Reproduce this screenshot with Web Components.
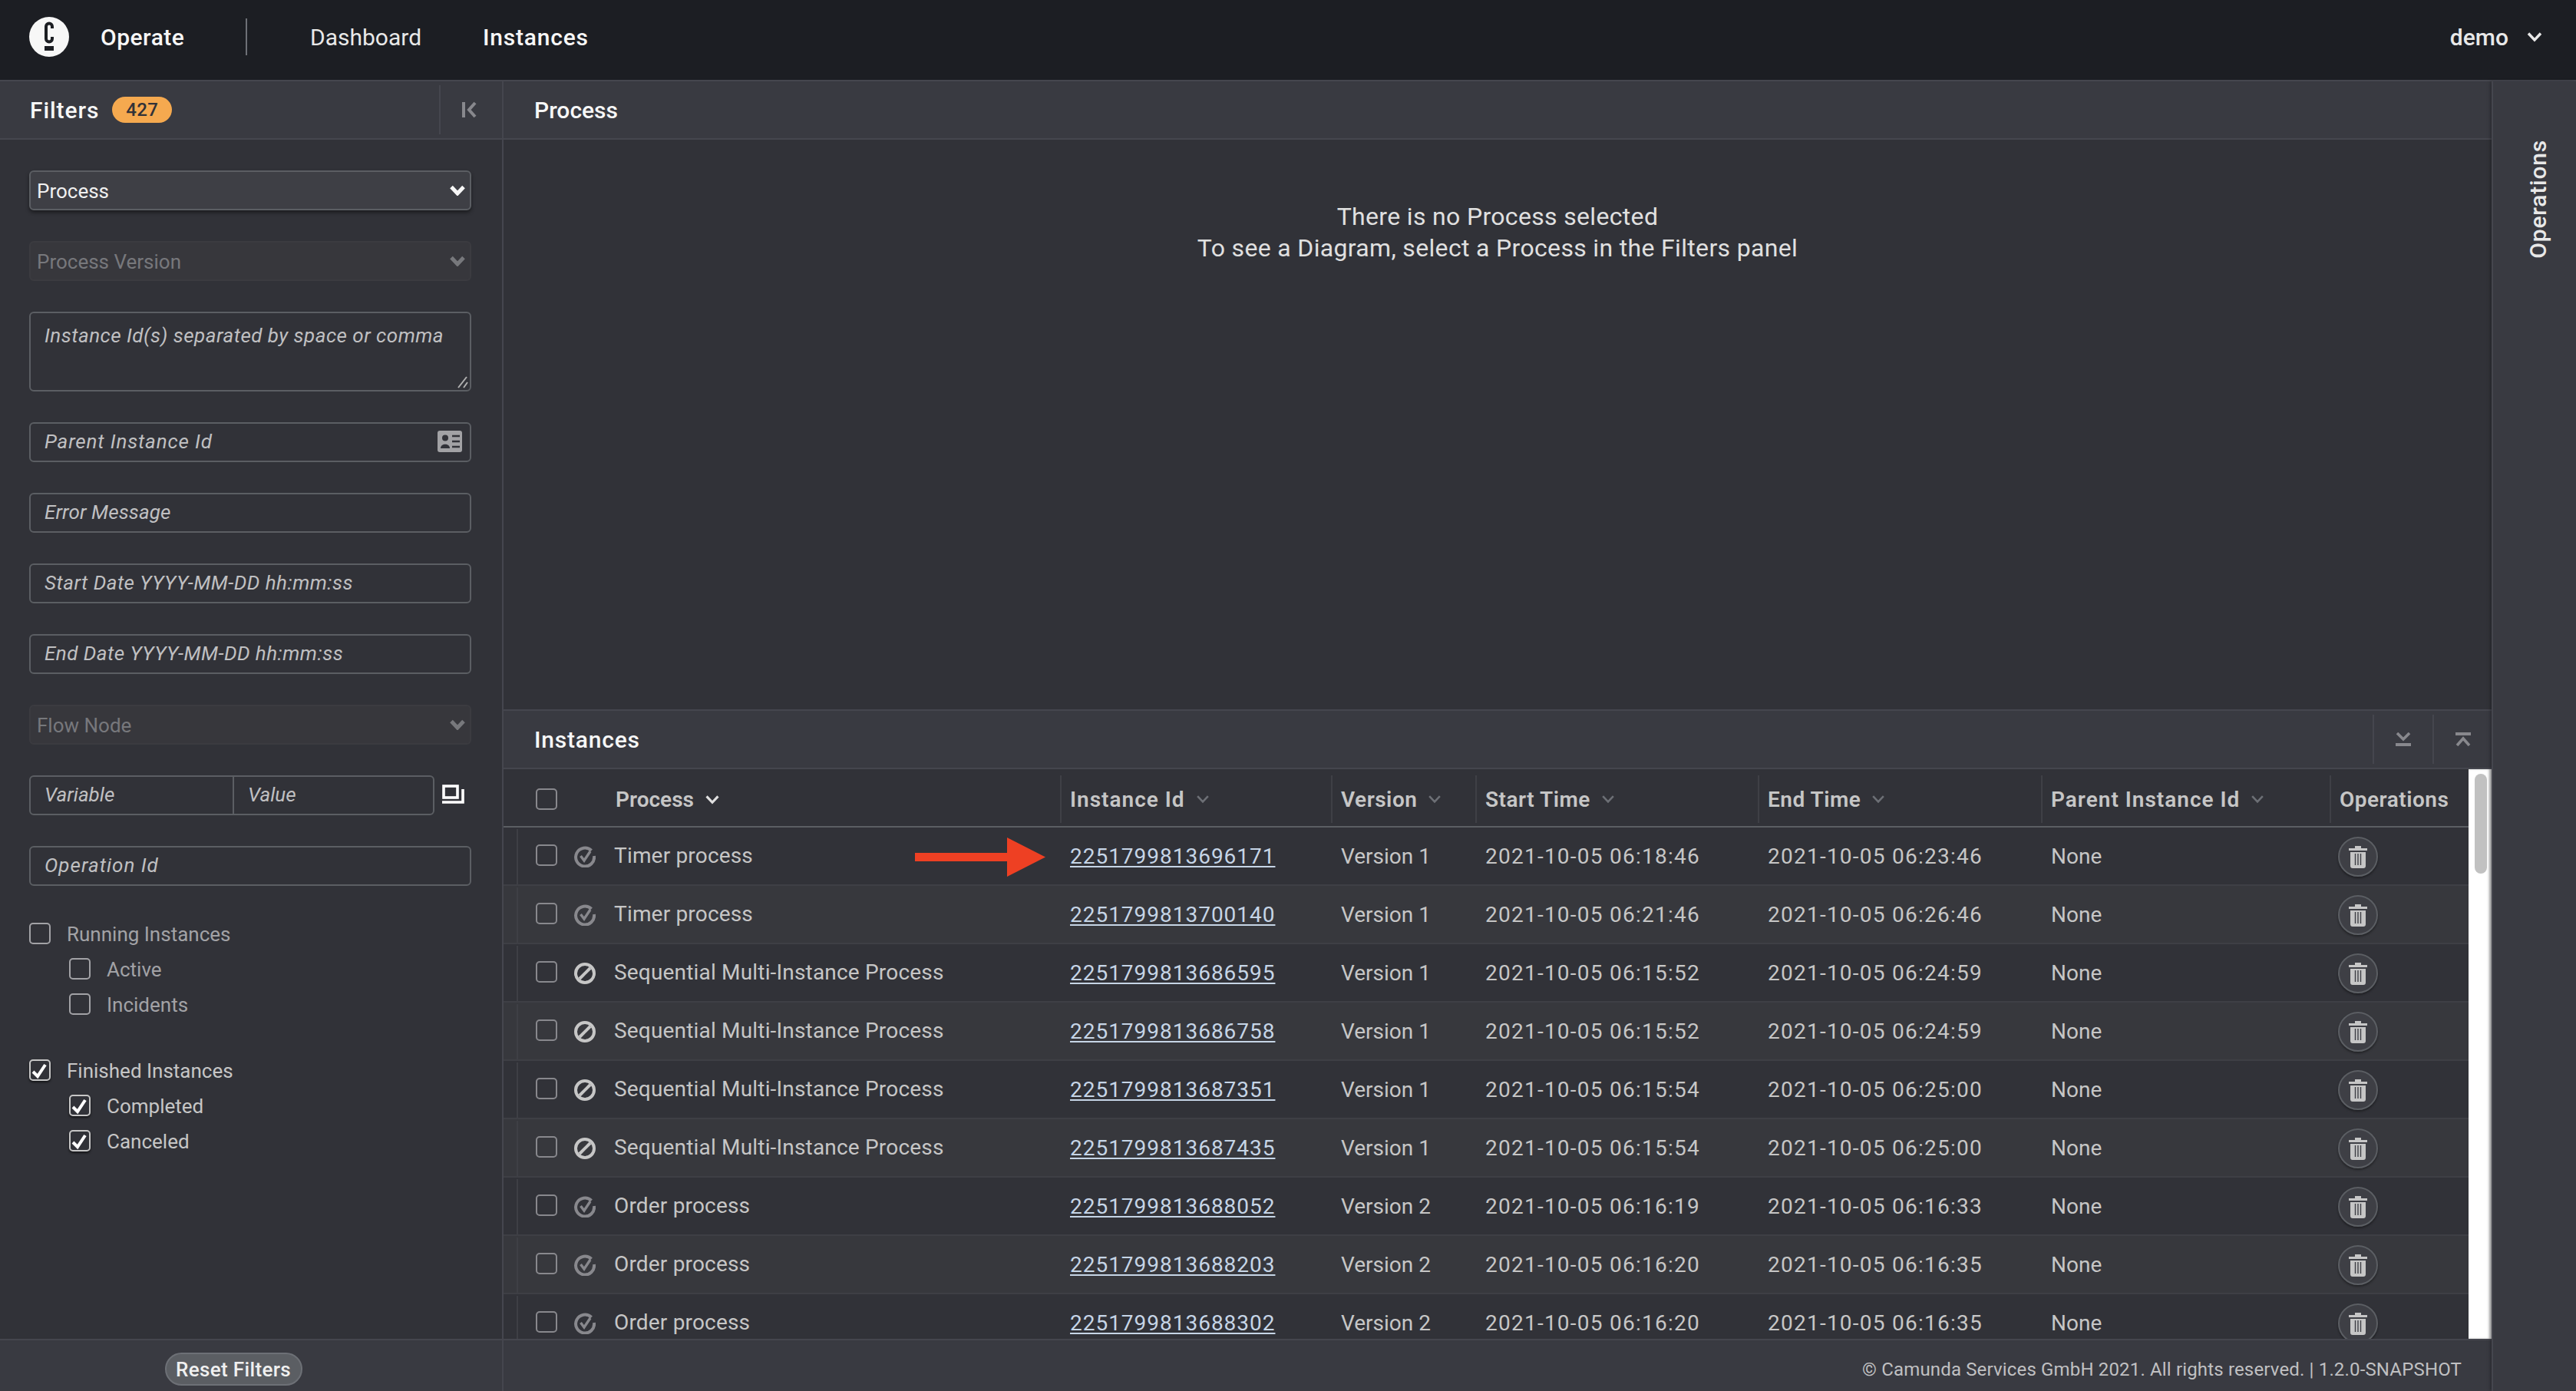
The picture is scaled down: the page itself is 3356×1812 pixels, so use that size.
<!DOCTYPE html>
<html>
<head>
<meta charset="utf-8">
<title>Operate</title>
<style>
  html, body { margin: 0; height: 100%; overflow: hidden; background: #313238; }
  body { font-family: Roboto, "Liberation Sans", sans-serif; font-size: 28px; color: #c6c6c6; }
</style>
</head>
<body>
<operate-app>
  <top-bar slot="top"></top-bar>
  <filters-panel slot="left"></filters-panel>
  <process-panel slot="main"></process-panel>
  <instances-panel slot="main">
    <instance-row marked state="done" process="Timer process" instance="2251799813696171" version="Version 1" start="2021-10-05 06:18:46" end="2021-10-05 06:23:46"></instance-row>
    <instance-row state="done" process="Timer process" instance="2251799813700140" version="Version 1" start="2021-10-05 06:21:46" end="2021-10-05 06:26:46"></instance-row>
    <instance-row state="canceled" process="Sequential Multi-Instance Process" instance="2251799813686595" version="Version 1" start="2021-10-05 06:15:52" end="2021-10-05 06:24:59"></instance-row>
    <instance-row state="canceled" process="Sequential Multi-Instance Process" instance="2251799813686758" version="Version 1" start="2021-10-05 06:15:52" end="2021-10-05 06:24:59"></instance-row>
    <instance-row state="canceled" process="Sequential Multi-Instance Process" instance="2251799813687351" version="Version 1" start="2021-10-05 06:15:54" end="2021-10-05 06:25:00"></instance-row>
    <instance-row state="canceled" process="Sequential Multi-Instance Process" instance="2251799813687435" version="Version 1" start="2021-10-05 06:15:54" end="2021-10-05 06:25:00"></instance-row>
    <instance-row state="done" process="Order process" instance="2251799813688052" version="Version 2" start="2021-10-05 06:16:19" end="2021-10-05 06:16:33"></instance-row>
    <instance-row state="done" process="Order process" instance="2251799813688203" version="Version 2" start="2021-10-05 06:16:20" end="2021-10-05 06:16:35"></instance-row>
    <instance-row state="done" process="Order process" instance="2251799813688302" version="Version 2" start="2021-10-05 06:16:20" end="2021-10-05 06:16:35"></instance-row>
  </instances-panel>
  <ops-rail slot="rail"></ops-rail>
</operate-app>

<script>
const chevron = (w, h, sw, color) => `<svg width="${w}" height="${h}" viewBox="0 0 20 14" style="display:block;flex:none" fill="none"><path d="M2 2.5 L10 11 L18 2.5" stroke="${color}" stroke-width="${sw}"/></svg>`;

class OperateApp extends HTMLElement {
  constructor() {
    super();
    this.attachShadow({mode: 'open'}).innerHTML = `
      <style>
        :host { display: flex; flex-direction: column; height: 1812px; }
        .body { flex: 1; display: flex; min-height: 0; }
        .main { flex: 1; display: flex; flex-direction: column; min-width: 0; }
      </style>
      <slot name="top"></slot>
      <div class="body">
        <slot name="left"></slot>
        <div class="main"><slot name="main"></slot></div>
        <slot name="rail"></slot>
      </div>`;
  }
}

class TopBar extends HTMLElement {
  constructor() {
    super();
    this.attachShadow({mode: 'open'}).innerHTML = `
      <style>
        :host { display: flex; align-items: center; height: 104px; box-sizing: content-box; padding: 0 44px 0 38px; background: #1c1e23; border-bottom: 2px solid #45464e; color: #f7f7f7; font-size: 30px; }
        .row { display: flex; align-items: center; width: 100%; height: 96px; margin-bottom: 8px; }
        svg { display: block; flex: none; }
        .brand { margin-left: 41px; width: 189px; font-weight: 500; letter-spacing: .5px; }
        .sep { width: 2px; height: 48px; background: #6d7076; }
        .dash { margin-left: 82px; width: 225px; color: #e8e8e8; }
        .inst { font-weight: 500; color: #f7f7f7; letter-spacing: .8px; }
        .user { margin-left: auto; margin-right: 24px; font-weight: 500; color: #e8e8e8; }
      </style>
      <div class="row">
        <svg width="52" height="52" viewBox="0 0 52 52">
          <circle cx="26" cy="26" r="26" fill="#f7f7f7"/>
          <path d="M30 15 V12.5 a4 4 0 0 0 -8 0 V28.5 a4 4 0 0 0 8 0 V26" fill="none" stroke="#1c1e23" stroke-width="4"/>
          <rect x="20" y="38" width="12" height="6" fill="#1c1e23"/>
        </svg>
        <span class="brand">Operate</span>
        <span class="sep"></span>
        <span class="dash">Dashboard</span>
        <span class="inst">Instances</span>
        <span class="user">demo</span>
        ${chevron(20, 14, 3.4, '#e8e8e8')}
      </div>`;
  }
}

class PanelHeader extends HTMLElement {
  constructor() {
    super();
    this.attachShadow({mode: 'open'}).innerHTML = `
      <style>
        :host { display: flex; align-items: center; height: 74px; flex: none; box-sizing: content-box; background: #393a41; border-bottom: 2px solid #45464e; color: #f7f7f7; font-size: 30px; font-weight: 500; padding-left: var(--pad, 40px); }
        .extra { margin-left: auto; display: flex; height: 64px; }
      </style>
      <slot></slot>
      <div class="extra"><slot name="extra"></slot></div>`;
  }
}

class FilterField extends HTMLElement {
  constructor() {
    super();
    this.attachShadow({mode: 'open'}).innerHTML = `
      <style>
        :host { display: flex; align-items: center; box-sizing: border-box; height: 52px; padding: 0 10px 2px 18px; border: 2px solid #5b5e63; border-radius: 6px; font-style: italic; font-size: 26px; letter-spacing: .48px; color: #c0c0c2; flex: none; }
        :host([tall]) { height: 104px; align-items: flex-start; padding-top: 14px; position: relative; }
        ::slotted(svg) { margin-left: auto; }
      </style>
      <slot></slot>`;
  }
}

class FilterSelect extends HTMLElement {
  connectedCallback() {
    const off = this.hasAttribute('disabled');
    const root = this.attachShadow({mode: 'open'});
    root.innerHTML = `
      <style>
        :host { display: flex; align-items: center; box-sizing: border-box; height: 52px; padding: 0 6px 0 8px; border-radius: 6px; font-size: 26px; flex: none; justify-content: space-between; }
        :host(:not([disabled])) { background: #3e3f45; border: 2px solid #5b5e63; color: #f0f0f0; box-shadow: 0 3px 5px rgba(0,0,0,.45); }
        :host([disabled]) { background: #37373c; border: 2px solid #3b3b40; color: #77787c; }
        slot { display: block; margin-top: 2px; }
      </style>
      <slot></slot>
      ${chevron(20, 14, 5, off ? '#77787c' : '#f7f7f7')}`;
  }
}

class FilterCheck extends HTMLElement {
  connectedCallback() {
    const on = this.hasAttribute('checked');
    this.attachShadow({mode: 'open'}).innerHTML = `
      <style>
        :host { display: flex; align-items: center; gap: 21px; height: 28px; font-size: 26px; color: ${on ? '#c6c6c6' : '#a2a2a6'}; }
        :host([child]) { margin-left: 52px; }
        .box { width: 28px; height: 28px; box-sizing: border-box; border: 2px solid ${on ? '#c6c6c6' : '#a2a2a6'}; border-radius: 5px; ${on ? 'box-shadow: 0 2px 3px rgba(0,0,0,.6);' : ''} flex: none; }
        svg { display: block; }
        slot { display: block; margin-top: 2px; }
      </style>
      <div class="box">${on ? `<svg width="24" height="24" viewBox="0 0 24 24"><path d="M3 14 L9 20 L19 5" fill="none" stroke="#fff" stroke-width="4"/></svg>` : ''}</div>
      <slot></slot>`;
  }
}

class FiltersPanel extends HTMLElement {
  constructor() {
    super();
    this.attachShadow({mode: 'open'}).innerHTML = `
      <style>
        :host { display: flex; flex-direction: column; width: 654px; flex: none; border-right: 2px solid #45464e; }
        panel-header { --pad: 39px; }
        .title { margin-right: 17px; letter-spacing: .9px; }
        .badge { display: inline-block; width: 78px; height: 34px; line-height: 34px; border-radius: 17px; background: #f5a94f; color: #313238; font-size: 24px; font-weight: 500; text-align: center; letter-spacing: .4px; }
        .collapse { display: flex; align-items: center; width: 82px; height: 64px; border-left: 2px solid #45464e; padding-left: 28px; box-sizing: border-box; }
        form { flex: 1; display: flex; flex-direction: column; gap: 40px; padding: 40px 40px 0 38px; }
        .pair { display: flex; align-items: center; gap: 10px; }
        .pair .vv { flex: none; width: 528px; display: flex; height: 52px; box-sizing: border-box; border: 2px solid #5b5e63; border-radius: 6px; font-style: italic; font-size: 26px; color: #c0c0c2; align-items: center; }
        .vv span { padding: 0 0 2px 18px; box-sizing: border-box; }
        .vv span:first-child { width: 263px; flex: none; }
        .vv span + span { flex: 1; border-left: 2px solid #5b5e63; height: 100%; display: flex; align-items: center; }
        .group { display: flex; flex-direction: column; gap: 18px; }
        .checks { display: flex; flex-direction: column; gap: 58px; margin-top: 8px; }
        footer { flex: none; height: 68px; border-top: 2px solid #45464e; background: #393a41; display: flex; justify-content: center; align-items: flex-start; padding: 16px 46px 0 0; box-sizing: border-box; }
        button { all: unset; box-sizing: border-box; width: 179px; height: 43px; border-radius: 22px; background: #5b5e63; border: 2px solid #6d7076; color: #f0f0f0; font-size: 26px; letter-spacing: .35px; font-weight: 500; text-align: center; line-height: 38px; }
        .resize { position: absolute; right: 2px; bottom: 2px; }
      </style>
      <panel-header>
        <span class="title">Filters</span><span class="badge">427</span>
        <div slot="extra" class="collapse">
          <svg width="20" height="22" viewBox="0 0 20 22"><path d="M2 1 V21" stroke="#88888d" stroke-width="4"/><path d="M17 2 L9 11 L17 20" fill="none" stroke="#88888d" stroke-width="4"/></svg>
        </div>
      </panel-header>
      <form>
        <filter-select>Process</filter-select>
        <filter-select disabled>Process Version</filter-select>
        <filter-field tall>Instance Id(s) separated by space or comma
          <svg class="resize" width="14" height="16" viewBox="0 0 14 16"><path d="M1 15 L12 1 M8 15 L13 8" stroke="#b0b0b0" stroke-width="2"/></svg>
        </filter-field>
        <filter-field style="letter-spacing:.85px">Parent Instance Id
          <svg width="32" height="28" viewBox="0 0 32 28" style="display:block">
            <rect width="32" height="28" rx="3" fill="#a2a2a5"/>
            <circle cx="10" cy="9.5" r="4" fill="#313238"/>
            <path d="M4 23 C4 16 16 16 16 23 Z" fill="#313238"/>
            <path d="M19 7 H29 M19 14 H29 M19 21 H29" stroke="#313238" stroke-width="2.6"/>
          </svg>
        </filter-field>
        <filter-field style="letter-spacing:.1px">Error Message</filter-field>
        <filter-field>Start Date YYYY-MM-DD hh:mm:ss</filter-field>
        <filter-field>End Date YYYY-MM-DD hh:mm:ss</filter-field>
        <filter-select disabled>Flow Node</filter-select>
        <div class="pair">
          <div class="vv"><span>Variable</span><span>Value</span></div>
          <svg width="29" height="25" viewBox="0 0 29 25" style="display:block;margin:-4px 0 0 0;flex:none">
            <rect x="2" y="2" width="18" height="15" fill="none" stroke="#fff" stroke-width="3.6"/>
            <path d="M0 23 H27 V6" fill="none" stroke="#fff" stroke-width="3.6"/>
          </svg>
        </div>
        <filter-field style="letter-spacing:1px">Operation Id</filter-field>
        <div class="checks">
          <div class="group">
            <filter-check>Running Instances</filter-check>
            <filter-check child>Active</filter-check>
            <filter-check child>Incidents</filter-check>
          </div>
          <div class="group">
            <filter-check checked>Finished Instances</filter-check>
            <filter-check checked child>Completed</filter-check>
            <filter-check checked child>Canceled</filter-check>
          </div>
        </div>
      </form>
      <footer><button>Reset Filters</button></footer>`;
  }
}

class ProcessPanel extends HTMLElement {
  constructor() {
    super();
    this.attachShadow({mode: 'open'}).innerHTML = `
      <style>
        :host { display: flex; flex-direction: column; flex: none; height: 818px; border-bottom: 2px solid #45464e; box-sizing: content-box; }
        .empty { flex: 1; text-align: center; padding-top: 80px; line-height: 41px; font-size: 32px; letter-spacing: .33px; color: #e0e0e0; }
      </style>
      <panel-header>Process</panel-header>
      <div class="empty">There is no Process selected<br>To see a Diagram, select a Process in the Filters panel</div>`;
  }
}

class InstancesPanel extends HTMLElement {
  constructor() {
    super();
    const sort = (c) => chevron(18, 12, 3, c);
    this.attachShadow({mode: 'open'}).innerHTML = `
      <style>
        :host { display: flex; flex-direction: column; flex: 1; min-height: 0; --cols: 17px 708px 353px 188px 368px 369px 376px 181px; }
        .title { letter-spacing: .8px; }
        .toggle { display: flex; align-items: center; justify-content: center; width: 78px; height: 64px; border-left: 2px solid #45464e; box-sizing: border-box; }
        .toggle.last { width: 77px; }
        .area { flex: 1; display: flex; min-height: 0; }
        .table { flex: 1; min-width: 0; overflow: hidden; }
        .head { display: grid; grid-template-columns: var(--cols); height: 74px; border-bottom: 2px solid #5b5e63; font-weight: 600; color: #c6c6c6; }
        .th { display: flex; align-items: center; gap: 14px; height: 62px; margin-top: 8px; border-left: 2px solid #3f4046; padding-left: 11px; letter-spacing: .5px; }
        .th.wide { letter-spacing: 1px; }
        .th.first { grid-column: 1 / 3; border: 0; padding-left: 0; letter-spacing: 0; }
        .th.first .box { margin: 0 62px 0 42px; width: 28px; height: 28px; box-sizing: border-box; border: 2px solid #88888d; border-radius: 5px; }
        .bar { flex: none; width: 30px; background: #fff; box-shadow: inset -3px 0 3px rgba(0,0,0,.25); padding: 6px 6px 0 8px; box-sizing: border-box; }
        .thumb { height: 130px; border-radius: 8px; background: #c1c1c1; }
        footer { flex: none; height: 68px; box-sizing: border-box; border-top: 2px solid #45464e; background: #393a41; text-align: right; padding-right: 39px; line-height: 76px; font-size: 24px; letter-spacing: .16px; color: #c0c0c2; }
      </style>
      <panel-header><span class="title">Instances</span>
        <div slot="extra" class="toggle"><svg width="20" height="18" viewBox="0 0 20 18"><path d="M2 1 L10 9 L18 1" fill="none" stroke="#88888d" stroke-width="3.6"/><path d="M0 16 H20" stroke="#88888d" stroke-width="4"/></svg></div>
        <div slot="extra" class="toggle last"><svg width="20" height="18" viewBox="0 0 20 18"><path d="M2 17 L10 8 L18 17" fill="none" stroke="#88888d" stroke-width="3.6"/><path d="M0 2 H20" stroke="#88888d" stroke-width="4"/></svg></div>
      </panel-header>
      <div class="area">
        <div class="table">
          <div class="head">
            <div class="th first"><span class="box"></span>Process ${chevron(20, 13, 3.4, '#e0e0e0')}</div>
            <div class="th wide">Instance Id ${sort('#6d7076')}</div>
            <div class="th">Version ${sort('#6d7076')}</div>
            <div class="th">Start Time ${sort('#6d7076')}</div>
            <div class="th">End Time ${sort('#6d7076')}</div>
            <div class="th wide">Parent Instance Id ${sort('#6d7076')}</div>
            <div class="th">Operations</div>
          </div>
          <slot></slot>
        </div>
        <div class="bar"><div class="thumb"></div></div>
      </div>
      <footer>© Camunda Services GmbH 2021. All rights reserved. | 1.2.0-SNAPSHOT</footer>`;
  }
}

class InstanceRow extends HTMLElement {
  connectedCallback() {
    const a = (n) => this.getAttribute(n);
    const done = a('state') === 'done';
    const icon = done
      ? `<svg class="st" width="28" height="28" viewBox="0 0 28 28" fill="none"><path d="M22.5 6 A12 12 0 1 0 26 13" stroke="#88888d" stroke-width="4"/><path d="M8.5 13 L13 19 L21 7" stroke="#88888d" stroke-width="3.4"/></svg>`
      : `<svg class="st" width="28" height="28" viewBox="0 0 28 28" fill="none"><circle cx="14" cy="14" r="12" stroke="#c6c6c6" stroke-width="4"/><path d="M7 21 L21 7" stroke="#c6c6c6" stroke-width="4"/></svg>`;
    const even = Array.from(this.parentNode.children).indexOf(this) % 2 === 1;
    this.attachShadow({mode: 'open'}).innerHTML = `
      <style>
        :host { display: grid; grid-template-columns: var(--cols); height: 76px; box-sizing: border-box; border-bottom: 2px solid #3e3f45; background: ${even ? '#37383d' : '#313238'}; position: relative; color: #c6c6c6; }
        .td { display: flex; align-items: center; padding-left: 13px; }
        .first { padding-left: 23px; border-left: 2px solid #3e3f45; margin-top: 2px; }
        .box { width: 28px; height: 28px; box-sizing: border-box; border: 2px solid #88888d; border-radius: 5px; flex: none; margin-bottom: 4px; }
        .st { margin: 0 24px 0 22px; display: block; flex: none; }
        .name { letter-spacing: .18px; margin-bottom: 3px; }
        a { color: #c6d5e6; text-decoration: underline; text-underline-offset: 3px; letter-spacing: .98px; }
        .time { letter-spacing: 1.24px; }
        .del { width: 52px; height: 52px; box-sizing: border-box; border-radius: 50%; background: #3e3f45; border: 2px solid #5b5e63; box-shadow: 0 2px 3px rgba(0,0,0,.4); display: flex; align-items: center; justify-content: center; margin: 2px 0 0 -2px; }
        .arrow { position: absolute; left: 536px; top: 13px; display: block; }
      </style>
      <span></span>
      <div class="td first"><span class="box"></span>${icon}<span class="name">${a('process')}</span></div>
      <div class="td"><a>${a('instance')}</a></div>
      <div class="td">${a('version')}</div>
      <div class="td time">${a('start')}</div>
      <div class="td time">${a('end')}</div>
      <div class="td">None</div>
      <div class="td">
        <span class="del"><svg width="24" height="30" viewBox="0 0 24 30"><path d="M0 4 H8 V1 H16 V4 H24 V7 H0 Z M2 9 H22 V27 Q22 30 19 30 H5 Q2 30 2 27 Z" fill="#c6c6c6"/><path d="M8.5 11 V26 M15.5 11 V26 M12 11 V26" stroke="#3e3f45" stroke-width="1.4"/></svg></span>
      </div>
      ${this.hasAttribute('marked') ? `<svg class="arrow" width="170" height="51" viewBox="0 0 170 51"><path d="M0 20 H120 V0 L170 25.5 L120 51 V31 H0 Z" fill="#ee4023"/></svg>` : ''}`;
  }
}

class OpsRail extends HTMLElement {
  constructor() {
    super();
    this.attachShadow({mode: 'open'}).innerHTML = `
      <style>
        :host { display: block; width: 110px; box-sizing: border-box; flex: none; background: #393a41; border-left: 2px solid #45464e; box-shadow: -2px 0 4px rgba(0,0,0,.25); position: relative; padding: 76px 0 0 41px; color: #e8e8e8; font-size: 30px; font-weight: 500; letter-spacing: .8px; }
        span { display: block; writing-mode: vertical-rl; transform: rotate(180deg); }
      </style>
      <span>Operations</span>`;
  }
}

customElements.define('panel-header', PanelHeader);
customElements.define('filter-field', FilterField);
customElements.define('filter-select', FilterSelect);
customElements.define('filter-check', FilterCheck);
customElements.define('top-bar', TopBar);
customElements.define('filters-panel', FiltersPanel);
customElements.define('process-panel', ProcessPanel);
customElements.define('instance-row', InstanceRow);
customElements.define('instances-panel', InstancesPanel);
customElements.define('ops-rail', OpsRail);
customElements.define('operate-app', OperateApp);
</script>
</body>
</html>
